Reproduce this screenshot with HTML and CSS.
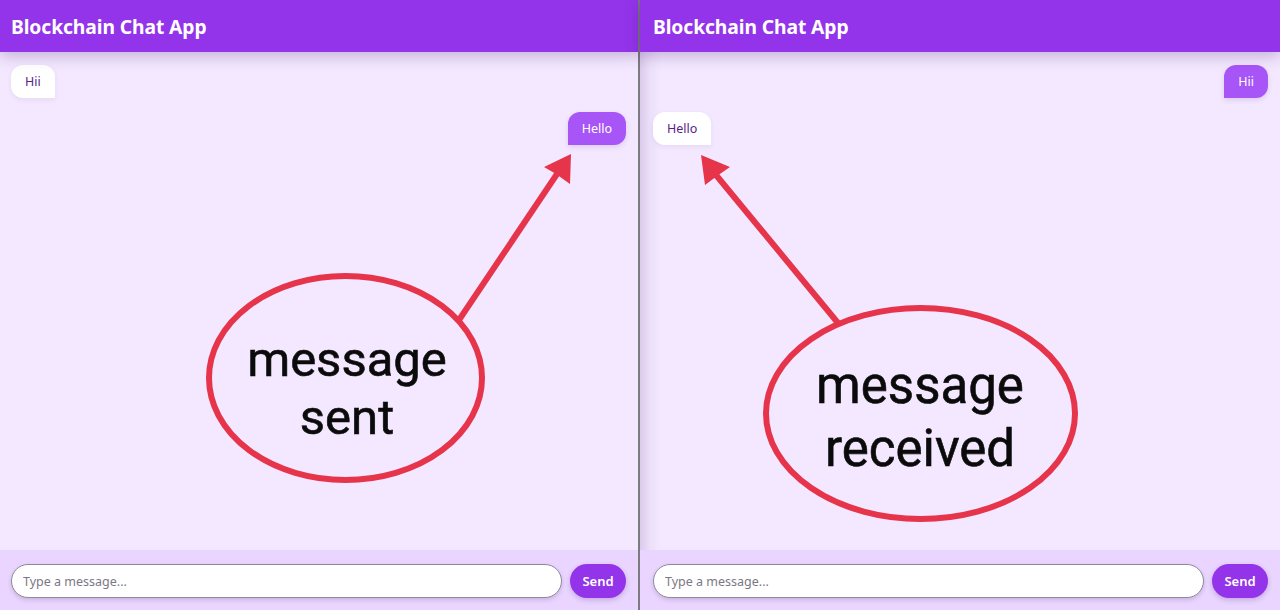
FILE: index.html
```html
<!DOCTYPE html>
<html lang="en">
<head>
<meta charset="utf-8">
<title>Blockchain Chat App</title>
<link rel="stylesheet" href="styles.css">
</head>
<body>
<div class="screen">
  <section class="panel panel-left">
    <header class="app-header"><h1>Blockchain Chat App</h1></header>
    <main class="messages">
      <div class="msg received">Hii</div>
      <div class="msg sent">Hello</div>
    </main>
    <footer class="composer">
      <input class="composer-input" type="text" placeholder="Type a message...">
      <button class="send-btn">Send</button>
    </footer>
  </section>
  <div class="divider"></div>
  <section class="panel panel-right">
    <header class="app-header"><h1>Blockchain Chat App</h1></header>
    <main class="messages">
      <div class="msg sent">Hii</div>
      <div class="msg received">Hello</div>
    </main>
    <footer class="composer">
      <input class="composer-input" type="text" placeholder="Type a message...">
      <button class="send-btn">Send</button>
    </footer>
  </section>

  <svg class="annotations" width="1280" height="610" viewBox="0 0 1280 610">
    <g fill="none" stroke="#e6344b" stroke-width="6">
      <ellipse cx="345.5" cy="378" rx="136.5" ry="102"/>
      <ellipse cx="920.5" cy="413.5" rx="154.5" ry="105.5"/>
      <line x1="459" y1="320" x2="557" y2="174"/>
      <line x1="838" y1="323" x2="716" y2="175"/>
    </g>
    <g fill="#e6344b">
      <polygon points="571,154 544,167 556,174 570,184"/>
      <polygon points="701,155 730,167 717,176 705,185"/>
    </g>
    <g class="note" text-anchor="middle">
      <text x="347" y="376" font-size="49">message</text>
      <text x="347" y="434" font-size="49">sent</text>
      <text x="920" y="403" font-size="51">message</text>
      <text x="920" y="466" font-size="51">received</text>
    </g>
  </svg>
</div>
</body>
</html>
```
FILE: styles.css
```css
* { box-sizing: border-box; }
html, body {
  margin: 0;
  padding: 0;
  width: 1280px;
  height: 610px;
  overflow: hidden;
  font-family: "Noto Sans", "Open Sans", sans-serif;
}
.screen {
  position: relative;
  display: flex;
  width: 1280px;
  height: 610px;
  background: #f3e8ff;
}
.panel {
  display: flex;
  flex-direction: column;
  height: 610px;
  background: #f3e8ff;
}
.panel-left { width: 638px; }
.panel-right {
  width: 640px;
  box-shadow: inset 12px 0 18px -10px rgba(80, 40, 120, 0.25);
}
.divider {
  width: 2px;
  background: #7d7a80;
}
.app-header {
  height: 52px;
  background: #9333ea;
  display: flex;
  align-items: center;
  padding: 0 11px;
  box-shadow: 0 4px 14px rgba(70, 30, 110, 0.28);
  position: relative;
  z-index: 1;
}
.panel-right .app-header { padding-left: 13px; }
.app-header h1 {
  margin: 0;
  color: #ffffff;
  font-size: 19.3px;
  font-weight: 700;
  letter-spacing: -0.1px;
}
.messages {
  flex: 1;
  display: flex;
  flex-direction: column;
  align-items: flex-start;
  gap: 14px;
  padding: 13px 12px 13px 11px;
}
.panel-right .messages { padding-left: 13px; }
.msg {
  font-size: 12.5px;
  line-height: 17px;
  padding: 8px 14px;
  border-radius: 12px;
}
.msg.received {
  background: #ffffff;
  color: #581c87;
  border-bottom-right-radius: 0;
  box-shadow: 0 2px 5px rgba(90, 40, 140, 0.08);
}
.msg.sent {
  align-self: flex-end;
  background: #a855f7;
  color: #ffffff;
  border-bottom-left-radius: 0;
  box-shadow: 0 2px 5px rgba(90, 40, 140, 0.15);
}
.composer {
  height: 60px;
  display: flex;
  align-items: flex-start;
  gap: 8px;
  padding: 14px 12px 12px 11px;
  background: #e9d5ff;
}
.panel-right .composer { padding-left: 13px; }
.composer-input {
  flex: 1;
  height: 34px;
  border: 1px solid #8f8a99;
  border-radius: 17px;
  background: #ffffff;
  padding: 0 11px;
  font-family: "Noto Sans", "Open Sans", sans-serif;
  font-size: 12.5px;
  color: #333;
  box-shadow: 0 2px 4px rgba(60, 30, 90, 0.18);
  outline: none;
}
.composer-input::placeholder { color: #7b7785; }
.send-btn {
  width: 56px;
  height: 34px;
  border: none;
  border-radius: 17px;
  background: #9333ea;
  color: #ffffff;
  font-family: "Noto Sans", "Open Sans", sans-serif;
  font-size: 13px;
  font-weight: 600;
  box-shadow: 0 2px 5px rgba(90, 30, 140, 0.25);
  padding: 0;
}
.annotations {
  position: absolute;
  left: 0;
  top: 0;
  pointer-events: none;
}
.note text {
  font-family: Roboto, "Noto Sans", sans-serif;
  font-weight: 400;
  fill: #0b0b0b;
  stroke: #0b0b0b;
  stroke-width: 0.6px;
}
```
